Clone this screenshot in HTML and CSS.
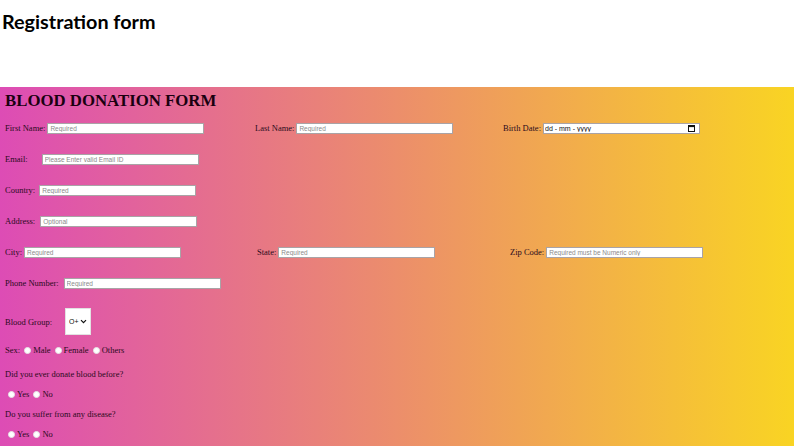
FILE: index.html
```html
<!DOCTYPE html>
<html>
<head>
<meta charset="utf-8">
<link rel="stylesheet" href="styles.css">
</head>
<body>
<header class="top">
  <h1 class="page-title">Registration form</h1>
</header>
<section class="form-wrap">
  <h2 class="form-title">BLOOD DONATION FORM</h2>
  <div class="rows">
    <div class="row">
      <div class="cell c1"><label>First Name:</label><input class="txt m2" placeholder="Required"></div>
      <div class="cell c2"><label>Last Name:</label><input class="txt m2" placeholder="Required"></div>
      <div class="cell"><label>Birth Date:</label>
        <span class="date-wrap m2">
          <input class="txt date" placeholder="dd - mm - yyyy">
          <svg class="cal" width="7" height="7" viewBox="0 0 7 7" aria-hidden="true">
            <rect x="0.5" y="0.5" width="6" height="6" fill="none" stroke="#111" stroke-width="1"/>
            <rect x="0.5" y="0.5" width="6" height="1.6" fill="#111"/>
          </svg>
        </span>
      </div>
    </div>
    <div class="row">
      <div class="cell"><label>Email:</label><input class="txt m-email" placeholder="Please Enter valid Email ID"></div>
    </div>
    <div class="row">
      <div class="cell"><label>Country:</label><input class="txt m-country" placeholder="Required"></div>
    </div>
    <div class="row">
      <div class="cell"><label>Address:</label><input class="txt m-addr" placeholder="Optional"></div>
    </div>
    <div class="row">
      <div class="cell c1b"><label>City:</label><input class="txt m2" placeholder="Required"></div>
      <div class="cell c2b"><label>State:</label><input class="txt m2" placeholder="Required"></div>
      <div class="cell"><label>Zip Code:</label><input class="txt m2" placeholder="Required must be Numeric only"></div>
    </div>
    <div class="row">
      <div class="cell"><label>Phone Number:</label><input class="txt m-phone" placeholder="Required"></div>
    </div>
    <div class="row tall">
      <div class="cell"><label>Blood Group:</label>
        <span class="sel-wrap">
          <select class="sel">
            <option>O+</option><option>O-</option><option>A+</option><option>A-</option>
            <option>B+</option><option>B-</option><option>AB+</option><option>AB-</option>
          </select>
          <svg class="chev" width="7" height="5" viewBox="0 0 7 5" aria-hidden="true">
            <path d="M1 1.2 L3.5 3.7 L6 1.2" fill="none" stroke="#111" stroke-width="1.2"/>
          </svg>
        </span>
      </div>
    </div>
  </div>
  <div class="row sex">
    <label>Sex:</label>
    <span class="opt"><input type="radio" name="sex" class="rad"><span>Male</span></span>
    <span class="opt"><input type="radio" name="sex" class="rad"><span>Female</span></span>
    <span class="opt"><input type="radio" name="sex" class="rad"><span>Others</span></span>
  </div>
  <div class="row q">Did you ever donate blood before?</div>
  <div class="row yn">
    <span class="opt"><input type="radio" name="d1" class="rad"><span>Yes</span></span>
    <span class="opt"><input type="radio" name="d1" class="rad"><span>No</span></span>
  </div>
  <div class="row q">Do you suffer from any disease?</div>
  <div class="row yn">
    <span class="opt"><input type="radio" name="d2" class="rad"><span>Yes</span></span>
    <span class="opt"><input type="radio" name="d2" class="rad"><span>No</span></span>
  </div>
</section>
</body>
</html>
```
FILE: styles.css
```css
html, body {
  margin: 0;
  padding: 0;
  background: #ffffff;
  height: 100%;
}
body {
  font-family: "Liberation Serif", "Times New Roman", serif;
  color: #2a0a1c;
  display: flex;
  flex-direction: column;
  overflow: hidden;
}
.top {
  height: 87px;
  flex: none;
}
.page-title {
  margin: 0;
  padding: 8px 0 0 2px;
  font-family: Lato, "Open Sans", sans-serif;
  font-weight: 700;
  font-size: 19.8px;
  line-height: 26px;
  color: #000;
}
.form-wrap {
  flex: 1;
  background: linear-gradient(to right, #dd4cb5 0%, #ec8e6b 50%, #f9d423 100%);
  padding: 4px 0 0 5px;
}
.form-title {
  margin: 0;
  font-family: "Liberation Serif", "Times New Roman", serif;
  font-weight: 700;
  font-size: 16.8px;
  line-height: 20px;
  color: #1a0010;
}
.rows {
  display: flex;
  flex-direction: column;
  gap: 19px;
  margin-top: 11px;
}
.row {
  display: flex;
  align-items: center;
  height: 12px;
  font-size: 8.5px;
  white-space: nowrap;
}
.row.tall {
  height: 27px;
}
.cell {
  display: flex;
  align-items: center;
  flex: none;
}
.c1 { width: 250px; }
.c2 { width: 248px; }
.c1b { width: 252px; }
.c2b { width: 253px; }
.txt {
  flex: none;
  box-sizing: border-box;
  width: 157px;
  height: 11px;
  padding: 0 2px;
  border: 1px solid #a9a3a6;
  border-radius: 0;
  background: #fff;
  font-family: "Liberation Sans", Arial, sans-serif;
  font-size: 6.5px;
  color: #222;
  outline: none;
}
.txt::placeholder { color: #8a8a8a; }
.m2 { margin-left: 2px; }
.m-email { margin-left: 14px; }
.m-country { margin-left: 4px; }
.m-addr { margin-left: 5px; }
.m-phone { margin-left: 5px; }
.date-wrap {
  position: relative;
  display: inline-flex;
  flex: none;
}
.date {
  padding: 0 1px;
  font-size: 7px;
}
.date::placeholder { color: #111; }
.cal {
  position: absolute;
  right: 5px;
  top: 2px;
}
.sel-wrap {
  position: relative;
  display: inline-flex;
  margin-left: 13px;
  flex: none;
}
.sel {
  appearance: none;
  -webkit-appearance: none;
  box-sizing: border-box;
  width: 26px;
  height: 27px;
  border: 1px solid #e2e2e2;
  border-radius: 0;
  background: #fff;
  font-family: "Liberation Sans", Arial, sans-serif;
  font-size: 7px;
  color: #111;
  padding: 0 0 0 3px;
  outline: none;
}
.chev {
  position: absolute;
  right: 4px;
  top: 11px;
  pointer-events: none;
}
.sex { margin-top: 9px; }
.sex label { margin-right: 4px; }
.q { margin-top: 12px; }
.yn { margin-top: 8px; padding-left: 3px; }
.yn + .q { margin-top: 8px; }
.opt {
  display: inline-flex;
  align-items: center;
  margin-right: 4px;
}
.rad {
  appearance: none;
  -webkit-appearance: none;
  box-sizing: border-box;
  width: 7px;
  height: 7px;
  margin: 0 2px 0 0;
  border-radius: 50%;
  background: #fff;
  border: 1px solid #e6e6e6;
}
```
